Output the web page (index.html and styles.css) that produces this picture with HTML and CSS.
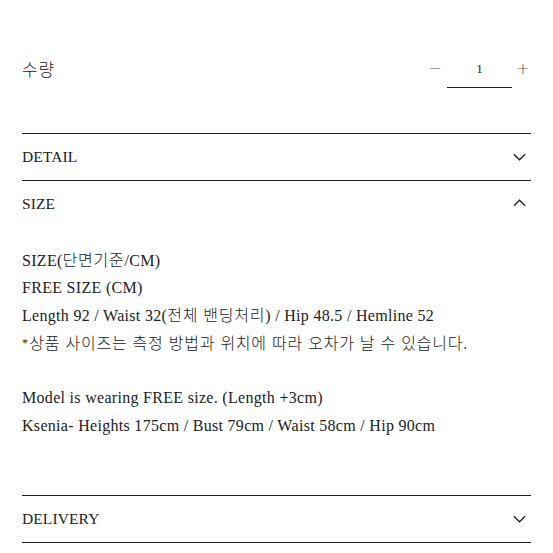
FILE: index.html
```html
<!DOCTYPE html>
<html lang="ko">
<head>
<meta charset="utf-8">
<link rel="stylesheet" href="styles.css">
</head>
<body>
<div class="page">
  <div class="qty-row">
    <span class="qty-label ko">수량</span>
    <div class="qty-control">
      <span class="qty-btn minus">−</span>
      <span class="qty-value">1</span>
      <span class="qty-btn plus">+</span>
    </div>
  </div>
  <div class="acc">
    <div class="acc-head"><span>DETAIL</span>
      <svg class="chev" viewBox="0 0 14 8" width="13" height="8"><path d="M1 1 L7 7 L13 1" fill="none" stroke="#222" stroke-width="1.4"/></svg>
    </div>
  </div>
  <div class="acc">
    <div class="acc-head"><span>SIZE</span>
      <svg class="chev" viewBox="0 0 14 8" width="13" height="8"><path d="M1 7 L7 1 L13 7" fill="none" stroke="#222" stroke-width="1.4"/></svg>
    </div>
    <div class="acc-body">
      <p>SIZE(<span class="ko">단면기준</span>/CM)</p>
      <p>FREE SIZE (CM)</p>
      <p>Length 92 / Waist 32(<span class="ko">전체 밴딩처리</span>) / Hip 48.5 / Hemline 52</p>
      <p><span class="ast">*</span><span class="ko">상품 사이즈는 측정 방법과 위치에 따라 오차가 날 수 있습니다.</span></p>
      <p class="blank">&nbsp;</p>
      <p>Model is wearing FREE size. (Length +3cm)</p>
      <p>Ksenia- Heights 175cm / Bust 79cm / Waist 58cm / Hip 90cm</p>
    </div>
  </div>
  <div class="acc acc-last">
    <div class="acc-head"><span>DELIVERY</span>
      <svg class="chev" viewBox="0 0 14 8" width="13" height="8"><path d="M1 1 L7 7 L13 1" fill="none" stroke="#222" stroke-width="1.4"/></svg>
    </div>
  </div>
</div>
</body>
</html>
```
FILE: styles.css
```css
html, body {
  margin: 0;
  padding: 0;
  background: #fff;
}
body {
  font-family: "Liberation Serif", "Noto Sans CJK KR", serif;
  color: #222;
}
.page {
  padding: 0 22px;
}
.ko {
  font-family: "Noto Sans CJK KR", sans-serif;
  font-weight: 300;
  letter-spacing: 0.75px;
}
.qty-row {
  height: 133px;
  display: flex;
  justify-content: space-between;
  align-items: flex-start;
  box-sizing: border-box;
  padding-top: 57px;
}
.qty-label {
  font-size: 17px;
  line-height: 24px;
}
.qty-control {
  display: flex;
  align-items: flex-start;
}
.qty-btn {
  font-family: "DejaVu Sans", sans-serif;
  font-weight: 200;
  font-size: 16px;
  line-height: 24px;
  color: #555;
  width: 16px;
  text-align: center;
}
.minus {
  margin-right: 4px;
}
.plus {
  margin-left: 3px;
}
.qty-value {
  width: 65px;
  padding-bottom: 5.5px;
  border-bottom: 1.5px solid #222;
  text-align: center;
  font-size: 13px;
  line-height: 24px;
}
.acc {
  border-top: 1.5px solid #222;
}
.acc-last {
  border-bottom: 1.5px solid #222;
}
.acc-head {
  height: 45.5px;
  display: flex;
  justify-content: space-between;
  align-items: center;
  font-size: 15.5px;
  letter-spacing: 0.1px;
  padding-top: 1px;
  box-sizing: border-box;
}
.chev {
  margin-right: 5px;
  margin-top: -1px;
}
.acc-body {
  padding: 20px 0 55.3px;
  font-size: 16px;
  line-height: 27.7px;
  letter-spacing: 0.3px;
}
.acc-body p {
  margin: 0;
  height: 27.7px;
  white-space: nowrap;
}
.ast {
  font-size: 12px;
  vertical-align: 2px;
  margin-right: 1px;
}
```
